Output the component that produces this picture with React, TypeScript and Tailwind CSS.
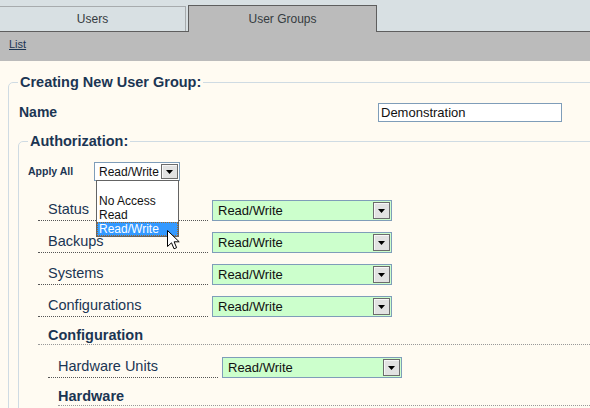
import React from 'react';

const navy = 'text-[#1b3553]';

function ArrowButton({ className = '' }: { className?: string }) {
  return (
    <div
      className={`flex items-center justify-center border border-[#6b6b6b] bg-[#e2e2e2] shadow-[inset_1px_1px_0_#f7f7f7] ${className}`}
    >
      <svg width="7" height="4" viewBox="0 0 7 4">
        <path d="M0 0H7L3.5 4Z" fill="#000" />
      </svg>
    </div>
  );
}

function GreenSelect() {
  return (
    <div className="ml-[4px] flex h-[21px] w-[180px] items-center border border-[#7f9db9] bg-[#ccffcc]">
      <span className="flex-1 pl-[5px] text-[13px] leading-none text-[#111]">Read/Write</span>
      <ArrowButton className="mr-px h-[17px] w-[17px]" />
    </div>
  );
}

function PermRow({ label, first = false }: { label: string; first?: boolean }) {
  return (
    <div className={`flex ${first ? '' : 'mt-[11px]'}`}>
      <div
        className={`flex h-[21px] w-[170px] items-center border-b border-dotted border-[#555] pl-[10px] text-[14.5px] ${navy}`}
      >
        {label}
      </div>
      <GreenSelect />
    </div>
  );
}

function Cursor() {
  return (
    <svg
      className="absolute left-[72px] top-[67px]"
      width="13"
      height="20"
      viewBox="0 0 13 20"
    >
      <path
        d="M0.5 0.5V16.5L4.5 12.8L7 18.8L9.6 17.7L7.1 11.8H12.2Z"
        fill="#fff"
        stroke="#000"
        strokeWidth="1"
        strokeLinejoin="miter"
      />
    </svg>
  );
}

export default function App() {
  return (
    <div className="flex h-[408px] w-[590px] flex-col overflow-hidden font-['Liberation_Sans',Arial,sans-serif]">
      {/* tabs */}
      <div className="flex h-[32px] items-end border-b border-[#5e5e5e] bg-[#d8e0e3]">
        <div className="flex h-[25px] w-[186px] items-center justify-center border-r border-t border-[#a7abad] text-[12px] text-[#353b40]">
          Users
        </div>
        <div className="relative -mb-px ml-[2px] flex h-[27px] w-[189px] items-center justify-center border-x border-t border-[#5e5e5e] bg-[#bbbbbb] text-[12px] text-[#353b40]">
          User Groups
        </div>
      </div>
      <div className="flex h-[29px] items-start bg-[#bbbbbb] pl-[9px] pt-[6px]">
        <a className="text-[11px] leading-[13px] text-[#1b3553] underline">List</a>
      </div>

      {/* content */}
      <div className="flex-1 overflow-hidden bg-[#fffbf2]">
        <fieldset className="ml-[8px] mt-[13px] w-[640px] rounded-[5px] border border-[#cfdbe3] pb-4 pl-[9px]">
          <legend className={`px-[2px] text-[14.5px] font-bold leading-[17px] ${navy}`}>
            Creating New User Group:
          </legend>

          <div className="mt-[12px] flex h-[19px] items-center">
            <div className={`w-[360px] pl-px text-[14px] font-bold ${navy}`}>Name</div>
            <div className="flex h-[19px] w-[184px] items-center border border-[#7f9db9] bg-white pl-[2px] text-[13px] text-[#111]">
              Demonstration
            </div>
          </div>

          <fieldset className="mt-[11px] rounded-[5px] border border-[#cfdbe3] pb-4 pl-[9px]">
            <legend className={`px-[2px] text-[14.5px] font-bold leading-[17px] ${navy}`}>
              Authorization:
            </legend>

            <div className="mt-[12px] flex h-[19px] items-center">
              <div className={`w-[66px] text-[10.5px] font-bold ${navy}`}>Apply All</div>
              <div className="relative z-10 flex h-[19px] w-[86px] items-center border border-[#7f9db9] bg-white">
                <span className="flex-1 pl-[4px] text-[12px] leading-none text-[#111]">Read/Write</span>
                <ArrowButton className="mr-px h-[15px] w-[17px]" />
                <div className="absolute left-[1px] top-[17px] w-[83px] border border-[#646464] bg-white text-[12px] leading-[14px] text-[#111]">
                  <div className="h-[13px]" />
                  <div className="h-[14px] pl-[2px]">No Access</div>
                  <div className="h-[14px] pl-[2px]">Read</div>
                  <div className="h-[14px] bg-[#3399ff] pl-[2px] text-white outline-1 outline-dotted -outline-offset-1 outline-[#a06a2a]">
                    Read/Write
                  </div>
                </div>
                <Cursor />
              </div>
            </div>

            <div className="ml-[10px] mt-[19px]">
              <PermRow label="Status" first />
              <PermRow label="Backups" />
              <PermRow label="Systems" />
              <PermRow label="Configurations" />

              <div
                className={`mt-[10px] h-[18px] border-b border-dotted border-[#999] pl-[10px] text-[14.5px] font-bold leading-[17px] ${navy}`}
              >
                Configuration
              </div>

              <div className="ml-[10px]">
                <div className="mt-[12px]">
                  <PermRow label="Hardware Units" first />
                </div>
                <div className="ml-[10px]">
                  <div
                    className={`mt-[10px] h-[18px] border-b border-dotted border-[#999] text-[14.5px] font-bold leading-[17px] ${navy}`}
                  >
                    Hardware
                  </div>
                </div>
              </div>
            </div>
          </fieldset>
        </fieldset>
      </div>
    </div>
  );
}
